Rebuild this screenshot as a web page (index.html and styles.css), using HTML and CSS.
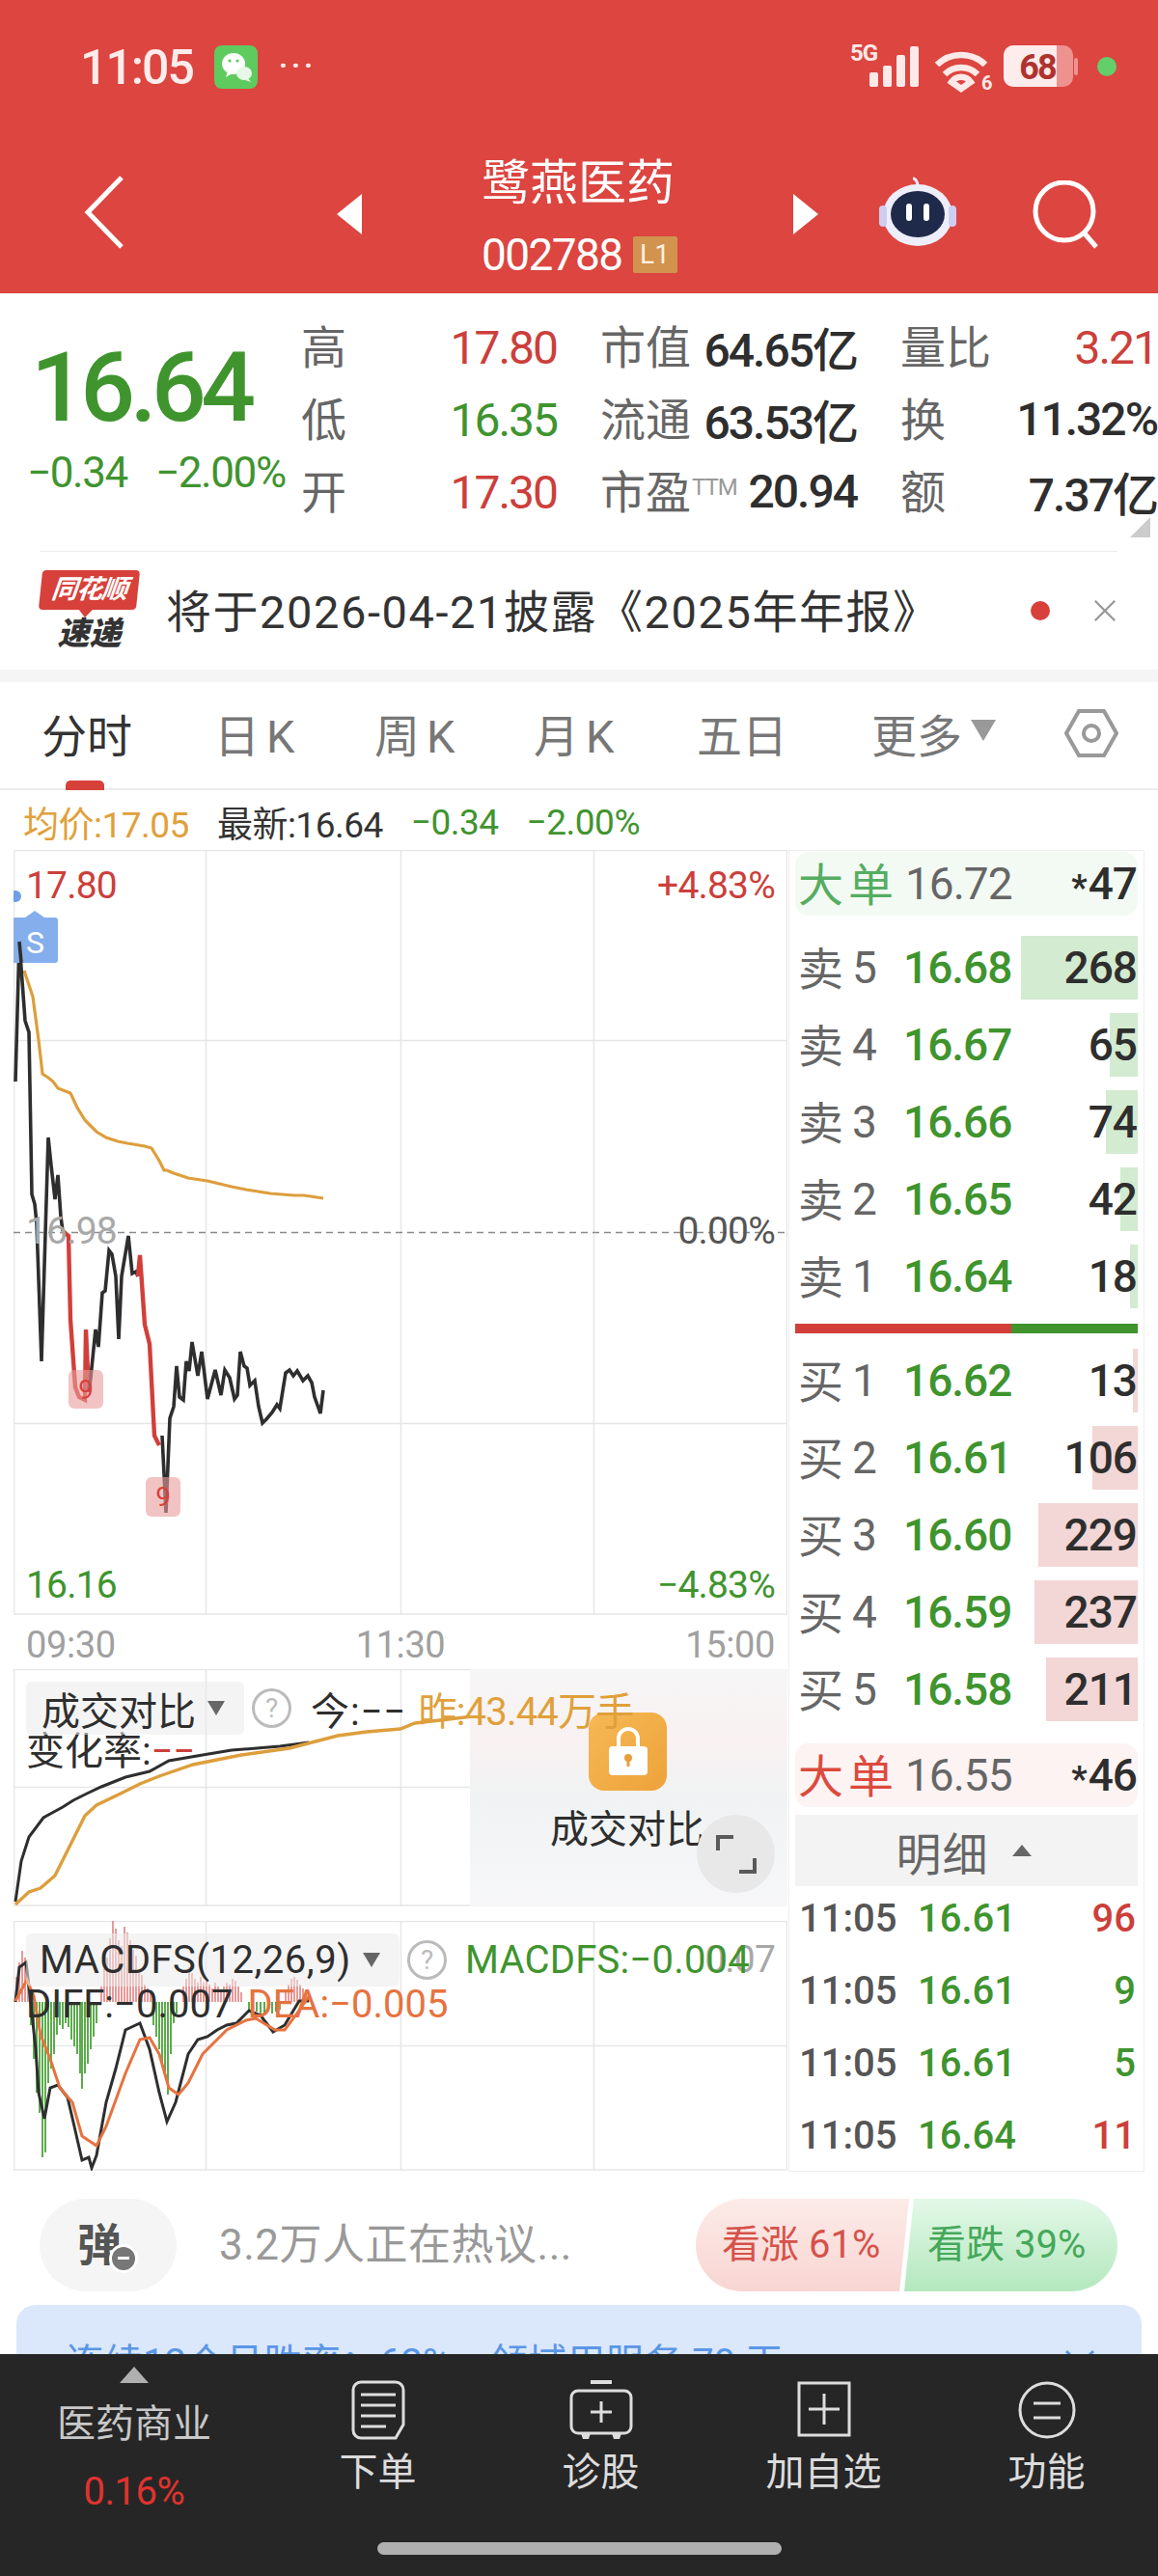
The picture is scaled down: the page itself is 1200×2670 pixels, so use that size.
FILE: index.html
```html
<!DOCTYPE html>
<html lang="zh">
<head>
<meta charset="utf-8">
<title>鹭燕医药</title>
<link rel="stylesheet" href="styles.css">
</head>
<body>
<div class="app">
  <header class="head">
    <div class="status">
      <span class="clock">11:05</span>
      <svg class="wx" viewBox="0 0 45 45"><rect width="45" height="45" rx="8" fill="#5fcb5f"/><ellipse cx="20" cy="19" rx="12" ry="11" fill="#fff"/><path d="M14 27l-2 6 7-4z" fill="#fff"/><ellipse cx="31" cy="29" rx="8" ry="7" fill="#e8f8e8"/><path d="M35 34l3 4-6-2z" fill="#e8f8e8"/><circle cx="16" cy="16" r="1.6" fill="#5fcb5f"/><circle cx="24" cy="16" r="1.6" fill="#5fcb5f"/></svg>
      <span class="dots">···</span>
      <span class="grow"></span>
      <svg class="sysicons" viewBox="0 0 290 60">
        <text x="8" y="21" class="fiveg">5G</text>
        <rect x="28" y="33" width="9" height="15" rx="2" fill="#fde9e7"/><rect x="42" y="26" width="9" height="22" rx="2" fill="#fde9e7"/><rect x="56" y="15" width="9" height="33" rx="2" fill="#fde9e7"/><rect x="70" y="6" width="9" height="42" rx="2" fill="#fde9e7"/>
        <path d="M98 25a36 36 0 0 1 50 0M106 35a24 24 0 0 1 34 0M113 43l10 7 10-7a12 12 0 0 0-20 0z" fill="none" stroke="#fde9e7" stroke-width="6.5"/>
        <text x="144" y="51" class="wifi6">6</text>
        <rect x="167" y="5" width="72" height="43" rx="10" fill="#ee9290"/>
        <path d="M177 5h45v43h-45a10 10 0 0 1-10-10v-23a10 10 0 0 1 10-10z" fill="#fdeceb"/>
        <rect x="240" y="18" width="4" height="18" rx="2" fill="#ee9290"/>
        <text x="202" y="40" class="batt">68</text>
        <circle cx="274" cy="27" r="10" fill="#62cf6b"/>
      </svg>
    </div>
    <nav class="nav">
      <svg class="back" viewBox="0 0 44 78"><path d="M40 3L5 39l35 36" fill="none" stroke="#fff" stroke-width="5"/></svg>
      <span class="tri-l"></span>
      <div class="title">
        <div class="name">鹭燕医药</div>
        <div class="code"><span>002788</span><b class="lvl">L1</b></div>
      </div>
      <span class="tri-r"></span>
      <svg class="robot" viewBox="0 0 84 76"><path d="M42 12c0-4-2-8-5-8" fill="none" stroke="#eae8f8" stroke-width="3"/><ellipse cx="42" cy="42" rx="36" ry="32" fill="#eeeefb"/><rect x="2" y="32" width="8" height="22" rx="4" fill="#cfcdf0"/><rect x="74" y="32" width="8" height="22" rx="4" fill="#cfcdf0"/><ellipse cx="42" cy="41" rx="28" ry="24" fill="#1f2a4a"/><rect x="30" y="30" width="6" height="18" rx="3" fill="#fff"/><rect x="48" y="30" width="6" height="18" rx="3" fill="#fff"/></svg>
      <svg class="search" viewBox="0 0 72 72"><circle cx="34" cy="32" r="30" fill="none" stroke="#fff" stroke-width="5"/><path d="M54 54l13 15" stroke="#fff" stroke-width="5"/></svg>
    </nav>
  </header>

  <section class="quote">
    <div class="price-col">
      <div class="price">16.64</div>
      <div class="change"><span>−0.34</span><span>−2.00%</span></div>
    </div>
    <div class="stats">
      <div class="st"><span class="lab">高</span><span class="up">17.80</span></div>
      <div class="st"><span class="lab">市值</span><span class="dark">64.65亿</span></div>
      <div class="st"><span class="lab">量比</span><span class="up">3.21</span></div>
      <div class="st"><span class="lab">低</span><span class="down">16.35</span></div>
      <div class="st"><span class="lab">流通</span><span class="dark">63.53亿</span></div>
      <div class="st"><span class="lab">换</span><span class="dark">11.32%</span></div>
      <div class="st"><span class="lab">开</span><span class="up">17.30</span></div>
      <div class="st"><span class="lab">市盈<sup class="ttm">TTM</sup></span><span class="dark">20.94</span></div>
      <div class="st"><span class="lab">额</span><span class="dark">7.37亿</span></div>
    </div>
    <span class="corner"></span>
  </section>
  <div class="rule"></div>
  <section class="news">
    <div class="logo">
      <div class="logo-top">同花顺<i class="logo-tip"></i></div>
      <div class="logo-bot">速递</div>
    </div>
    <div class="news-text">将于2026-04-21披露《2025年年报》</div>
    <span class="red-dot"></span>
    <svg class="close" viewBox="0 0 28 28"><path d="M3 3l22 22M25 3L3 25" stroke="#999" stroke-width="2.5"/></svg>
  </section>

  <div class="tabs">
    <span class="tab tab-on">分时<i class="tab-mark"></i></span>
    <span class="tab tab-k">日K</span>
    <span class="tab tab-k">周K</span>
    <span class="tab tab-k">月K</span>
    <span class="tab">五日</span>
    <span class="tab t6">更多<i class="tab-tri"></i></span>
    <svg class="hex" viewBox="0 0 56 56"><path d="M15 5h26l13 23-13 23H15L2 28z" fill="none" stroke="#999" stroke-width="4"/><circle cx="28" cy="28" r="8" fill="none" stroke="#999" stroke-width="4"/></svg>
  </div>
  <div class="legend">
    <span class="gold">均价:17.05</span><span class="dark2">最新:16.64</span><span class="down">−0.34</span><span class="down">−2.00%</span>
  </div>

  <div class="body">
    <div class="left">
      <div class="chart c1">
        <svg class="plot" viewBox="14 883 802 793" width="802" height="793">
          <path class="grid" d="M14.5 883.5H815.5V1675H14.5ZM213.5 883V1675M415.5 883V1675M615.5 883V1675M14 1080.5H816M14 1477.5H816"/>
          <path class="baseline" d="M14 1279.5H816"/>
          <path class="ln-avg" d="M25 1008L34 1035 40 1080 44 1115 50 1119 55 1123 60 1130 73 1135 80 1150 88 1163 93 1168 100 1175 110 1181 122 1185 132 1187 150 1190 157 1192 165 1205 170 1215 173 1215 180 1218 195 1223 215 1226 240 1232 255 1235 280 1239 305 1241 315 1241 335 1244"/>
          <path class="ln-black" d="M16 1123L20 978 26 1060 30 1072 33 1240 36 1250 38 1270 43 1413 50 1181 53 1210 57 1245 60 1220 63 1263 65 1278"/>
          <path class="ln-red" d="M65 1278L71 1283 73 1370 78 1440 82 1450 88 1453 89 1380 92 1445"/>
          <path class="ln-black" d="M92 1445L94 1430 99 1380 102 1398 106 1342 109 1340 113 1298 116 1302 120 1325 123 1390 126 1325 133 1283 137 1322 141 1320 143 1325"/>
          <path class="ln-red" d="M143 1325L145 1303 150 1375 155 1395 160 1490 165 1500"/>
          <path class="ln-black" d="M168 1490L172 1570 176 1472 180 1460 183 1418 186 1450 190 1453 193 1413 196 1423 199 1393 205 1428 209 1403 215 1452 223 1422 229 1448 233 1422 238 1430 243 1452 246 1448 249 1403 253 1418 256 1420 259 1438 264 1433 268 1460 272 1477 276 1473 282 1466 287 1458 290 1462 296 1425 300 1422 304 1428 308 1423 314 1433 319 1428 323 1435 326 1450 332 1467 335 1443"/>
          <circle cx="16" cy="931" r="6" fill="#6f9fe6"/>
          <path d="M15 953h11l10-7 10 7h11a3 3 0 0 1 3 3v41a3 3 0 0 1-3 3H16a3 3 0 0 1-3-3V956a3 3 0 0 1 2-3z" fill="#85aeec"/>
          <path class="ln-black" d="M20 978L22 1000"/>
          <text x="36.5" y="990" class="tag tag-s">S</text>
          <rect x="71" y="1422" width="36" height="40" rx="6" fill="#e89d9b" opacity=".6"/>
          <text x="89" y="1452" class="tag tag-r">9</text>
          <rect x="151" y="1533" width="36" height="41" rx="6" fill="#e89d9b" opacity=".6"/>
          <text x="169" y="1563" class="tag tag-r">9</text>
        </svg>
        <span class="lb l-tl up">17.80</span>
        <span class="lb l-tr up">+4.83%</span>
        <span class="lb l-ml gray">16.98</span>
        <span class="lb l-mr gray2">0.00%</span>
        <span class="lb l-bl down">16.16</span>
        <span class="lb l-br down">−4.83%</span>
      </div>
      <div class="axis"><span>09:30</span><span>11:30</span><span>15:00</span></div>
      <div class="chart c2">
        <svg class="plot" viewBox="14 1731 802 246" width="802" height="246">
          <path class="grid" d="M14.5 1731.5H815.5V1976H14.5ZM213.5 1731V1976M415.5 1731V1976M14 1853.5H816"/>
          <path class="ln-thin-black" d="M16 1972L22 1930 30 1905 45 1885 54 1880 65 1874 76 1867 90 1860 105 1853 130 1843 155 1837 175 1826 210 1820 240 1815 290 1811 320 1807"/>
          <path class="ln-thin-gold" d="M16 1975L30 1962 42 1958 57 1945 72 1915 88 1883 100 1872 125 1860 145 1850 165 1842 200 1830 250 1820 300 1813 350 1800 380 1796 415 1793 430 1787 490 1780"/>
        </svg>
        <div class="ind-row"><span class="ind-tag v1">成交对比<i class="ind-tri"></i></span><span class="qmark">?</span><span class="ind-v1 black">今:−−</span><span class="gold ind-v2">昨:43.44万手</span></div>
        <div class="ind-row2"><span class="black">变化率:</span><span class="up">−−</span></div>
        <div class="lock">
          <div class="lock-box"><svg viewBox="0 0 44 52" class="lock-ic"><path d="M12 22V12a10 10 0 0 1 20 0v10" fill="none" stroke="#fff" stroke-width="4"/><rect x="2" y="20" width="40" height="30" rx="4" fill="#fff"/><circle cx="22" cy="32" r="4" fill="#e9a03c"/><rect x="20.5" y="33" width="3" height="8" fill="#e9a03c"/></svg></div>
          <div class="lock-txt">成交对比</div>
          <div class="expand"><svg viewBox="0 0 44 44" width="44" height="44"><path d="M3 18V4h16M41 26v14H25" fill="none" stroke="#5a5a5a" stroke-width="4"/></svg></div>
        </div>
      </div>
      <div class="chart c3">
        <svg class="plot" viewBox="14 1992 802 259" width="802" height="259">
          <path class="grid" d="M14.5 1992.5H815.5V2250H14.5ZM213.5 1992V2250M415.5 1992V2250M615.5 1992V2250M14 2121.5H816"/>
          <path class="bar-r" d="M17 2076V2050M20 2076V2035M23 2076V2023M26 2076V2030M29 2076V2048M105 2076V2060M108 2076V2040M111 2076V2030M114 2076V2010M117 2076V1992M120 2076V2000M123 2076V2012M126 2076V2018M129 2076V1998M132 2076V2004M135 2076V2012M138 2076V2022M141 2076V2028M144 2076V2042M147 2076V2048M150 2076V2058M153 2076V2062M156 2076V2066M190 2076V2060M193 2076V2052M196 2076V2040M199 2076V2046M202 2076V2052M205 2076V2056M208 2076V2050M211 2076V2056M214 2076V2054M217 2076V2058M220 2076V2062M223 2076V2056M226 2076V2060M229 2076V2064M232 2076V2060M235 2076V2056M238 2076V2058M241 2076V2052M244 2076V2054M247 2076V2060M250 2076V2066M296 2076V2064M299 2076V2058M302 2076V2052M305 2076V2050M308 2076V2053M311 2076V2058M314 2076V2062M317 2076V2068M320 2076V2072"/>
          <path class="bar-g" d="M32 2076V2100M35 2076V2135M38 2076V2170M41 2076V2191M44 2076V2237M47 2076V2232M50 2076V2160M53 2076V2145M56 2076V2130M59 2076V2110M62 2076V2100M65 2076V2104M68 2076V2098M71 2076V2102M74 2076V2115M77 2076V2122M80 2076V2130M83 2076V2150M85 2076V2166M88 2076V2150M91 2076V2140M94 2076V2125M97 2076V2112M100 2076V2098M159 2076V2100M162 2076V2112M165 2076V2125M168 2076V2140M171 2076V2152M174 2076V2172M177 2076V2130M180 2076V2098M183 2076V2088M258 2076V2085M262 2076V2088M266 2076V2086M270 2076V2090M274 2076V2088M278 2076V2086M282 2076V2088M286 2076V2086M290 2076V2084"/>
          <path class="ln-thin-black" d="M16 2076L20 2040 27 2035 30 2060 37 2125 40 2170 46 2197 52 2165 60 2162 70 2175 77 2205 85 2240 92 2237 95 2248 100 2235 110 2180 120 2145 130 2105 145 2098 155 2125 165 2170 173 2200 182 2180 195 2130 205 2115 215 2112 225 2105 235 2100 245 2098 258 2085 270 2090 283 2107 295 2100 310 2075 320 2075"/>
          <path class="ln-thin-orange" d="M16 2075L28 2053 35 2070 42 2110 52 2135 62 2165 75 2180 85 2215 100 2225 110 2205 130 2150 145 2115 155 2113 165 2130 175 2165 185 2172 195 2160 210 2130 235 2105 255 2095 265 2093 285 2105 295 2105 310 2085 320 2070"/>
        </svg>
        <span class="lb l-macd gray">0.07</span>
        <div class="ind-row"><span class="ind-tag v2">MACDFS(12,26,9)<i class="ind-tri"></i></span><span class="qmark">?</span><span class="down ind-m">MACDFS:−0.004</span></div>
        <div class="ind-row2 second"><span class="black">DIFF:−0.007</span><span class="orange">DEA:−0.005</span></div>
      </div>
    </div>

    <aside class="book">
      <div class="big big-g"><span class="big-l">大单</span><span class="big-p">16.72</span><span class="big-v"><em>*</em>47</span></div>
      <div class="rows sells">
        <div class="row"><i class="depth d-g" style="width:121px"></i><span class="rl"><span class="rc">卖</span><b>5</b></span><span class="rp">16.68</span><span class="rv">268</span></div>
        <div class="row"><i class="depth d-g" style="width:29px"></i><span class="rl"><span class="rc">卖</span><b>4</b></span><span class="rp">16.67</span><span class="rv">65</span></div>
        <div class="row"><i class="depth d-g" style="width:33px"></i><span class="rl"><span class="rc">卖</span><b>3</b></span><span class="rp">16.66</span><span class="rv">74</span></div>
        <div class="row"><i class="depth d-g" style="width:18px"></i><span class="rl"><span class="rc">卖</span><b>2</b></span><span class="rp">16.65</span><span class="rv">42</span></div>
        <div class="row"><i class="depth d-g" style="width:8px"></i><span class="rl"><span class="rc">卖</span><b>1</b></span><span class="rp">16.64</span><span class="rv">18</span></div>
      </div>
      <div class="ratio"><i class="ratio-r"></i><i class="ratio-g"></i></div>
      <div class="rows buys">
        <div class="row"><i class="depth d-r" style="width:5px"></i><span class="rl"><span class="rc">买</span><b>1</b></span><span class="rp">16.62</span><span class="rv">13</span></div>
        <div class="row"><i class="depth d-r" style="width:47px"></i><span class="rl"><span class="rc">买</span><b>2</b></span><span class="rp">16.61</span><span class="rv">106</span></div>
        <div class="row"><i class="depth d-r" style="width:103px"></i><span class="rl"><span class="rc">买</span><b>3</b></span><span class="rp">16.60</span><span class="rv">229</span></div>
        <div class="row"><i class="depth d-r" style="width:107px"></i><span class="rl"><span class="rc">买</span><b>4</b></span><span class="rp">16.59</span><span class="rv">237</span></div>
        <div class="row"><i class="depth d-r" style="width:95px"></i><span class="rl"><span class="rc">买</span><b>5</b></span><span class="rp">16.58</span><span class="rv">211</span></div>
      </div>
      <div class="big big-r"><span class="big-l">大单</span><span class="big-p">16.55</span><span class="big-v"><em>*</em>46</span></div>
      <div class="detail-h">明细<i class="detail-tri"></i></div>
      <div class="ticks">
        <div class="tick"><span class="tt">11:05</span><span class="tp">16.61</span><span class="tv up">96</span></div>
        <div class="tick"><span class="tt">11:05</span><span class="tp">16.61</span><span class="tv down">9</span></div>
        <div class="tick"><span class="tt">11:05</span><span class="tp">16.61</span><span class="tv down">5</span></div>
        <div class="tick"><span class="tt">11:05</span><span class="tp">16.64</span><span class="tv up">11</span></div>
      </div>
    </aside>
  </div>

  <section class="social">
    <div class="social-row">
      <div class="danmu"><span class="danmu-t">弹</span><i class="danmu-off"></i></div>
      <div class="hot">3.2万人正在热议...</div>
      <div class="vote"><span class="vote-up">看涨 61%</span><span class="vote-dn">看跌 39%</span></div>
    </div>
    <div class="banner"><span>连续12个月胜率：62%，领域用服务 70 天</span><svg class="banner-ch" viewBox="0 0 32 18"><path d="M2 2l14 14L30 2" fill="none" stroke="#5a96e6" stroke-width="3"/></svg></div>
  </section>

  <footer class="foot">
    <div class="foot-grid">
      <div class="f-sector"><i class="f-tri"></i><span class="f-name">医药商业</span><span class="f-pct">0.16%</span></div>
      <div class="f-item"><svg viewBox="0 0 56 62" class="f-ic"><path d="M10 2h36a8 8 0 0 1 8 8v36l-8 14H10a8 8 0 0 1-8-8V10a8 8 0 0 1 8-8z" fill="none" stroke="#ddd" stroke-width="3"/><path d="M10 15h36M10 26h36M10 37h36M10 48h26" stroke="#ddd" stroke-width="3"/></svg><span>下单</span></div>
      <div class="f-item"><svg viewBox="0 0 66 62" class="f-ic"><path d="M22 2h22" stroke="#ddd" stroke-width="4"/><rect x="2" y="11" width="62" height="44" rx="7" fill="none" stroke="#ddd" stroke-width="3"/><path d="M33 22v22M22 33h22" stroke="#ddd" stroke-width="3"/><path d="M12 55l2 6h6l2-6M44 55l2 6h6l2-6" fill="#ddd"/></svg><span>诊股</span></div>
      <div class="f-item"><svg viewBox="0 0 56 62" class="f-ic"><rect x="2" y="3" width="52" height="54" fill="none" stroke="#ddd" stroke-width="3"/><path d="M28 14v32M12 30h32" stroke="#ddd" stroke-width="3"/></svg><span>加自选</span></div>
      <div class="f-item"><svg viewBox="0 0 60 62" class="f-ic"><circle cx="30" cy="31" r="28" fill="none" stroke="#ddd" stroke-width="3"/><path d="M16 24h28M16 39h28" stroke="#ddd" stroke-width="3"/></svg><span>功能</span></div>
    </div>
    <div class="home-bar"></div>
  </footer>
</div>
</body>
</html>
```

FILE: styles.css
```css
* { box-sizing: border-box; }
html, body { margin: 0; padding: 0; background: #fff; }
.app {
  width: 1200px; height: 2670px; overflow: hidden;
  font-family: Roboto, "Noto Sans CJK SC", sans-serif;
  display: flex; flex-direction: column; color: #333;
}
i { display: block; font-style: normal; }

.up { color: #cc3f3b; }
.down { color: #3f942e; }
.gold { color: #e0a03a; }
.orange { color: #e6733f; }
.black { color: #2e2e2e; }
.gray { color: #a8a8a8; }
.gray2 { color: #555; }

/* header */
.head { height: 304px; background: #dc4540; color: #fff; flex: none; }
.status { height: 138px; padding: 47px 0 0 83px; display: flex; align-items: flex-start; }
.clock { font-size: 50px; line-height: 47px; font-weight: 500; letter-spacing: -2px; color: #fdeceb; width: 139px; }
.wx { width: 45px; height: 45px; flex: none; }
.dots { font-size: 30px; line-height: 42px; margin-left: 22px; letter-spacing: 4px; color: #fdeceb; font-weight: 700; }
.grow { flex: 1; }
.sysicons { width: 290px; height: 60px; margin: -5px 37px 0 0; flex: none; overflow: visible; }
.fiveg { font: 700 24px Roboto, sans-serif; fill: #fde9e7; letter-spacing: -1px; }
.wifi6 { font: 700 20px Roboto, sans-serif; fill: #fde9e7; }
.batt { font: 700 36px Roboto, sans-serif; fill: #b0322e; text-anchor: middle; letter-spacing: -2px; }
.nav { height: 166px; display: flex; align-items: flex-start; position: relative; padding-left: 86px; }
.back { width: 44px; height: 78px; margin-top: 43px; flex: none; }
.tri-l { width: 0; height: 0; border: solid transparent; border-width: 21px 26px 21px 0; border-right-color: #fff; margin: 63px 0 0 219px; flex: none; }
.title { width: 447px; padding-left: 125px; flex: none; }
.name { font-size: 50px; line-height: 58px; margin-top: 23px; font-weight: 400; white-space: nowrap; margin-left: -1px; }
.code { display: flex; align-items: center; margin-top: 24px; height: 42px; margin-left: -1px; }
.code span { font-size: 46px; letter-spacing: -1.6px; }
.lvl { margin-left: 11px; width: 46px; height: 38px; background: #d2934f; color: #fdf0e0; font-size: 28px; font-weight: 400; border-radius: 2px; text-align: center; line-height: 38px; }
.tri-r { width: 0; height: 0; border: solid transparent; border-width: 21px 0 21px 26px; border-left-color: #fff; margin-top: 63px; flex: none; }
.robot { width: 84px; height: 76px; margin: 43px 0 0 61px; flex: none; }
.search { width: 72px; height: 72px; margin: 49px 0 0 76px; flex: none; }

/* quote */
.quote { height: 267px; display: flex; position: relative; flex: none; }
.price-col { width: 313px; padding: 48px 0 0 28px; flex: none; }
.price { font-size: 100px; line-height: 100px; font-weight: 500; letter-spacing: -5.5px; color: #3f942e; margin-left: 4px; }
.change { display: flex; gap: 29px; font-size: 44px; line-height: 50px; letter-spacing: -1.4px; color: #3f942e; margin-top: 13px; white-space: nowrap; }
.stats { display: grid; grid-template-columns: 264px 265px 265px; column-gap: 46px; grid-auto-rows: 75px; margin-top: 19px; width: 887px; flex: none; }
.st { display: flex; justify-content: space-between; align-items: center; font-size: 48px; letter-spacing: -2px; white-space: nowrap; }
.lab { font-size: 47px; letter-spacing: 0; color: #666; position: relative; margin-bottom: 8px; margin-left: -1px; }
.ttm { font-size: 24px; color: #999; vertical-align: 14px; line-height: 0; margin-left: 1px; letter-spacing: -1px; }
.dark { color: #2e2e2e; font-weight: 500; margin-bottom: 3px; }
.corner { position: absolute; right: 8px; top: 232px; width: 0; height: 0; border-style: solid; border-width: 0 0 21px 21px; border-color: transparent transparent #ccc transparent; }
.rule { height: 1px; background: #ececec; margin: 0 42px 0 41px; flex: none; }

/* news */
.news { height: 122px; display: flex; align-items: center; padding: 0 42px 0 42px; flex: none; }
.logo { width: 101px; flex: none; margin-top: -2px; }
.logo-top { height: 41px; background: #d8403b; color: #fff; border-radius: 4px; font-size: 27px; font-weight: 700; font-style: italic; text-align: center; line-height: 41px; transform: skewX(-6deg); white-space: nowrap; letter-spacing: -1px; position: relative; }
.logo-tip { position: absolute; left: 42px; bottom: -8px; width: 0; height: 0; border: solid transparent; border-width: 8px 7px 0; border-top-color: #d8403b; }
.logo-bot { font-size: 33px; line-height: 33px; margin-top: 8px; font-weight: 900; font-style: italic; text-align: center; color: #333; }
.news-text { font-size: 47px; letter-spacing: 1.55px; margin: -5px 0 0 29px; color: #333; white-space: nowrap; flex: 1; }
.red-dot { width: 20px; height: 20px; border-radius: 50%; background: #d8403b; flex: none; }
.close { width: 26px; height: 26px; margin-left: 44px; flex: none; }

/* tabs */
.tabs { height: 125px; border-top: 13px solid #f5f5f5; border-bottom: 2px solid #ececec; display: grid; grid-template-columns: 179px 166px 165px 169px 181px 200px 56px; padding-left: 43px; align-items: center; position: relative; font-size: 47px; color: #777; flex: none; }
.tab { white-space: nowrap; margin-top: -5px; }
.tab-k { letter-spacing: 7px; }
.tab-on { color: #333; position: relative; }
.tab-mark { position: absolute; left: 25px; bottom: -25px; width: 40px; height: 10px; border-radius: 5px 5px 0 0; background: #d8403b; }
.t6 { display: flex; align-items: center; }
.tab-tri { width: 0; height: 0; border: solid transparent; border-width: 22px 13px 0; border-top-color: #999; margin-left: 9px; margin-top: -6px; }
.hex { width: 56px; height: 56px; flex: none; margin-top: -4px; }

.legend { height: 62px; display: flex; align-items: center; padding: 4px 0 0 24px; font-size: 37px; letter-spacing: -.5px; flex: none; white-space: nowrap; }
.legend span { margin-right: 29px; }
.dark2 { color: #333; }

/* main body */
.body { display: flex; height: 1370px; flex: none; }
.left { width: 803px; margin-left: 14px; flex: none; }
.chart { position: relative; }
.plot { display: block; }
.grid { fill: none; stroke: #e6e6e6; stroke-width: 1.5; }
.baseline { fill: none; stroke: #8a8a8a; stroke-width: 1.5; stroke-dasharray: 7 5; }
.ln-avg { fill: none; stroke: #dd9e3c; stroke-width: 3.2; }
.ln-black { fill: none; stroke: #2e2e2e; stroke-width: 3.6; }
.ln-red { fill: none; stroke: #d23f3a; stroke-width: 4.4; }
.ln-thin-black { fill: none; stroke: #2e2e2e; stroke-width: 3; }
.ln-thin-gold { fill: none; stroke: #dd9e3c; stroke-width: 3.4; }
.ln-thin-orange { fill: none; stroke: #e6733f; stroke-width: 3; }
.bar-r { fill: none; stroke: #d9534f; stroke-width: 1.8; opacity: .65; }
.bar-g { fill: none; stroke: #4ca33a; stroke-width: 1.8; }
.tag { text-anchor: middle; font-family: Roboto, sans-serif; }
.tag-s { fill: #fff; font-size: 32px; }
.tag-r { fill: #d8403b; font-size: 28px; }
.lb { position: absolute; font-size: 39px; line-height: 44px; letter-spacing: -.8px; white-space: nowrap; }
.l-tl { left: 13px; top: 15px; }
.l-tr { right: 14px; top: 15px; }
.l-ml { left: 13px; top: 373px; }
.l-mr { right: 14px; top: 373px; }
.l-bl { left: 13px; top: 740px; }
.l-br { right: 14px; top: 740px; }
.l-macd { right: 14px; top: 18px; }
.axis { height: 56px; display: flex; justify-content: space-between; align-items: center; padding: 6px 14px 0 13px; font-size: 38px; color: #a0a0a0; letter-spacing: -.4px; }
.c3 { margin-top: 15px; }
.ind-row { position: absolute; left: 13px; top: 13px; display: flex; align-items: center; font-size: 40px; height: 55px; white-space: nowrap; z-index: 2; }
.ind-tag { height: 55px; background: rgba(235,235,235,.55); border-radius: 6px; display: flex; align-items: center; padding-left: 16px; color: #2e2e2e; }
.ind-tag.v1 { width: 226px; }
.ind-tag.v2 { width: 387px; letter-spacing: .5px; padding-left: 14px; }
.ind-tri { width: 0; height: 0; border: solid transparent; border-width: 15px 9px 0; border-top-color: #666; margin-left: 12px; }
.qmark { width: 41px; height: 41px; border: 3px solid #bbb; border-radius: 50%; color: #bbb; font-size: 28px; line-height: 35px; text-align: center; margin-left: 8px; flex: none; }
.ind-v1 { margin-left: 20px; letter-spacing: 1px; }
.ind-v2 { margin-left: 12px; letter-spacing: -.8px; position: relative; z-index: 2; }
.ind-m { margin-left: 19px; letter-spacing: .2px; }
.ind-row2 { position: absolute; left: 13px; top: 63px; font-size: 40px; line-height: 46px; white-space: nowrap; display: flex; }
.ind-row2.second { top: 64px; }
.ind-row2.second .orange { margin-left: 15px; }
.lock { position: absolute; left: 473px; top: 0; width: 329px; height: 246px; background: linear-gradient(180deg, #f6f6f6 0%, #f9f1f2 30%, #f0f3f3 55%, #f7f7f9 100%); }
.lock-box { position: absolute; left: 123px; top: 45px; width: 81px; height: 81px; border-radius: 16px; background: linear-gradient(135deg, #f5b955, #eea23a); display: flex; align-items: center; justify-content: center; }
.lock-ic { width: 44px; height: 52px; }
.lock-txt { position: absolute; left: 83px; top: 142px; font-size: 40px; line-height: 50px; color: #2e2e2e; white-space: nowrap; }
.expand { position: absolute; left: 235px; top: 151px; width: 81px; height: 81px; border-radius: 50%; background: #e8e8e8; display: flex; align-items: center; justify-content: center; }

/* order book */
.book { width: 369px; height: 1370px; border: 1.5px solid #eee; padding: 1px 6px 0; overflow: hidden; flex: none; }
.big { height: 66px; display: flex; align-items: center; border-radius: 14px; padding: 0 1px 0 3px; }
.big-g { background: #f3faf3; }
.big-r { background: #fdf3f3; margin-top: 23px; }
.big-l { width: 111px; font-size: 47px; letter-spacing: 5px; white-space: nowrap; flex: none; margin-bottom: 5px; }
.big-g .big-l { color: #55ad62; }
.big-r .big-l { color: #dc4a3e; }
.big-p { font-size: 46px; letter-spacing: -1px; color: #666; }
.big-v { margin-left: auto; font-size: 46px; letter-spacing: -1px; color: #2e2e2e; font-weight: 500; }
.big-v em { font-style: normal; font-weight: 700; font-size: 36px; margin-right: 2px; }
.rows { display: flex; flex-direction: column; gap: 14px; }
.sells { margin-top: 21px; }
.buys { margin-top: 16px; }
.row { height: 66px; display: flex; align-items: center; position: relative; padding-right: 1px; }
.depth { position: absolute; right: 0; top: 0; bottom: 0; }
.d-g { background: #d3ebd0; }
.d-r { background: #f3d6d6; }
.rl { width: 112px; padding-left: 3px; font-size: 46px; color: #666; flex: none; position: relative; white-space: nowrap; display: flex; align-items: center; }
.rc { font-size: 47px; margin-bottom: 5px; }
.rl b { font-family: Roboto, sans-serif; font-weight: 400; margin-left: 9px; }
.rp { font-size: 46px; letter-spacing: -1px; color: #3f942e; font-weight: 500; position: relative; }
.rv { margin-left: auto; font-size: 46px; letter-spacing: -1px; color: #2e2e2e; font-weight: 500; position: relative; }
.ratio { display: flex; height: 10px; margin-top: 16px; }
.ratio-r { width: 224px; background: #d23f3a; }
.ratio-g { flex: 1; background: #3f942e; }
.detail-h { height: 74px; margin-top: 8px; background: #f3f3f3; display: flex; align-items: center; justify-content: center; font-size: 47px; letter-spacing: 1px; color: #666; padding-right: 6px; }
.detail-tri { width: 0; height: 0; border: solid transparent; border-width: 0 10px 12px; border-bottom-color: #666; margin-left: 24px; }
.ticks { margin-top: -4px; }
.tick { height: 75px; display: flex; align-items: center; font-size: 40px; padding: 0 2px 0 4px; white-space: nowrap; }
.tt { color: #555; width: 123px; font-weight: 500; flex: none; }
.tp { color: #3f942e; font-weight: 500; }
.tv { margin-left: auto; font-weight: 500; }

/* social */
.social { height: 189px; overflow: hidden; flex: none; }
.social-row { height: 124px; padding: 28px 42px 0 41px; display: flex; align-items: flex-start; }
.danmu { width: 142px; height: 96px; border-radius: 48px; background: #f5f5f5; position: relative; display: flex; align-items: center; padding-left: 39px; font-size: 46px; font-weight: 700; color: #555; flex: none; }
.danmu-t { margin-top: -9px; }
.danmu-off { position: absolute; left: 72px; top: 47px; width: 30px; height: 30px; border-radius: 50%; background: #777; border: 3px solid #fff; }
.danmu-off::after { content: ""; display: block; width: 12px; height: 3px; background: #fff; margin: 10px auto 0; }
.hot { margin-left: 44px; font-size: 44px; line-height: 96px; color: #999; white-space: nowrap; letter-spacing: .5px; width: 494px; flex: none; }
.vote { display: flex; width: 437px; height: 96px; font-size: 40px; flex: none; white-space: nowrap; }
.vote-up { width: 221px; background: linear-gradient(180deg, #fcebe8, #f8d5d2); color: #d5524a; border-radius: 48px 0 0 48px; clip-path: polygon(0 0, 100% 0, 95.5% 100%, 0 100%); line-height: 96px; padding-left: 27px; flex: none; }
.vote-dn { width: 221px; margin-left: -5px; background: linear-gradient(180deg, #e3f8e8, #b3e8bd); color: #46a85a; border-radius: 0 48px 48px 0; clip-path: polygon(4.5% 0, 100% 0, 100% 100%, 0 100%); line-height: 96px; padding-left: 24px; flex: none; }
.banner { margin: 14px 17px 0; height: 90px; background: #dbe7fa; border-radius: 20px 20px 0 0; padding: 38px 48px 0 51px; font-size: 40px; line-height: 46px; color: #5a96e6; display: flex; justify-content: space-between; white-space: nowrap; }
.banner-ch { width: 32px; height: 18px; margin-top: 8px; }

/* footer */
.foot { height: 230px; background: #262626; flex: none; display: flex; flex-direction: column; }
.foot-grid { height: 195px; display: grid; grid-template-columns: 276px repeat(4, 231px); flex: none; }
.f-sector { display: flex; flex-direction: column; align-items: center; padding: 13px 0 0 2px; color: #c8c8c8; }
.f-tri { width: 0; height: 0; border: solid transparent; border-width: 0 15px 17px; border-bottom-color: #b0b0b0; }
.f-name { font-size: 40px; line-height: 50px; margin-top: 18px; }
.f-pct { font-size: 40px; line-height: 50px; margin-top: 20px; color: #e0332e; letter-spacing: -.5px; }
.f-item { display: flex; flex-direction: column; align-items: center; padding-top: 27px; font-size: 40px; line-height: 50px; color: #dcdcdc; }
.f-ic { height: 62px; width: 66px; }
.f-item span { margin-top: 9px; }
.home-bar { width: 419px; height: 13px; border-radius: 7px; background: #b0b0b0; margin: 0 auto; }
```
